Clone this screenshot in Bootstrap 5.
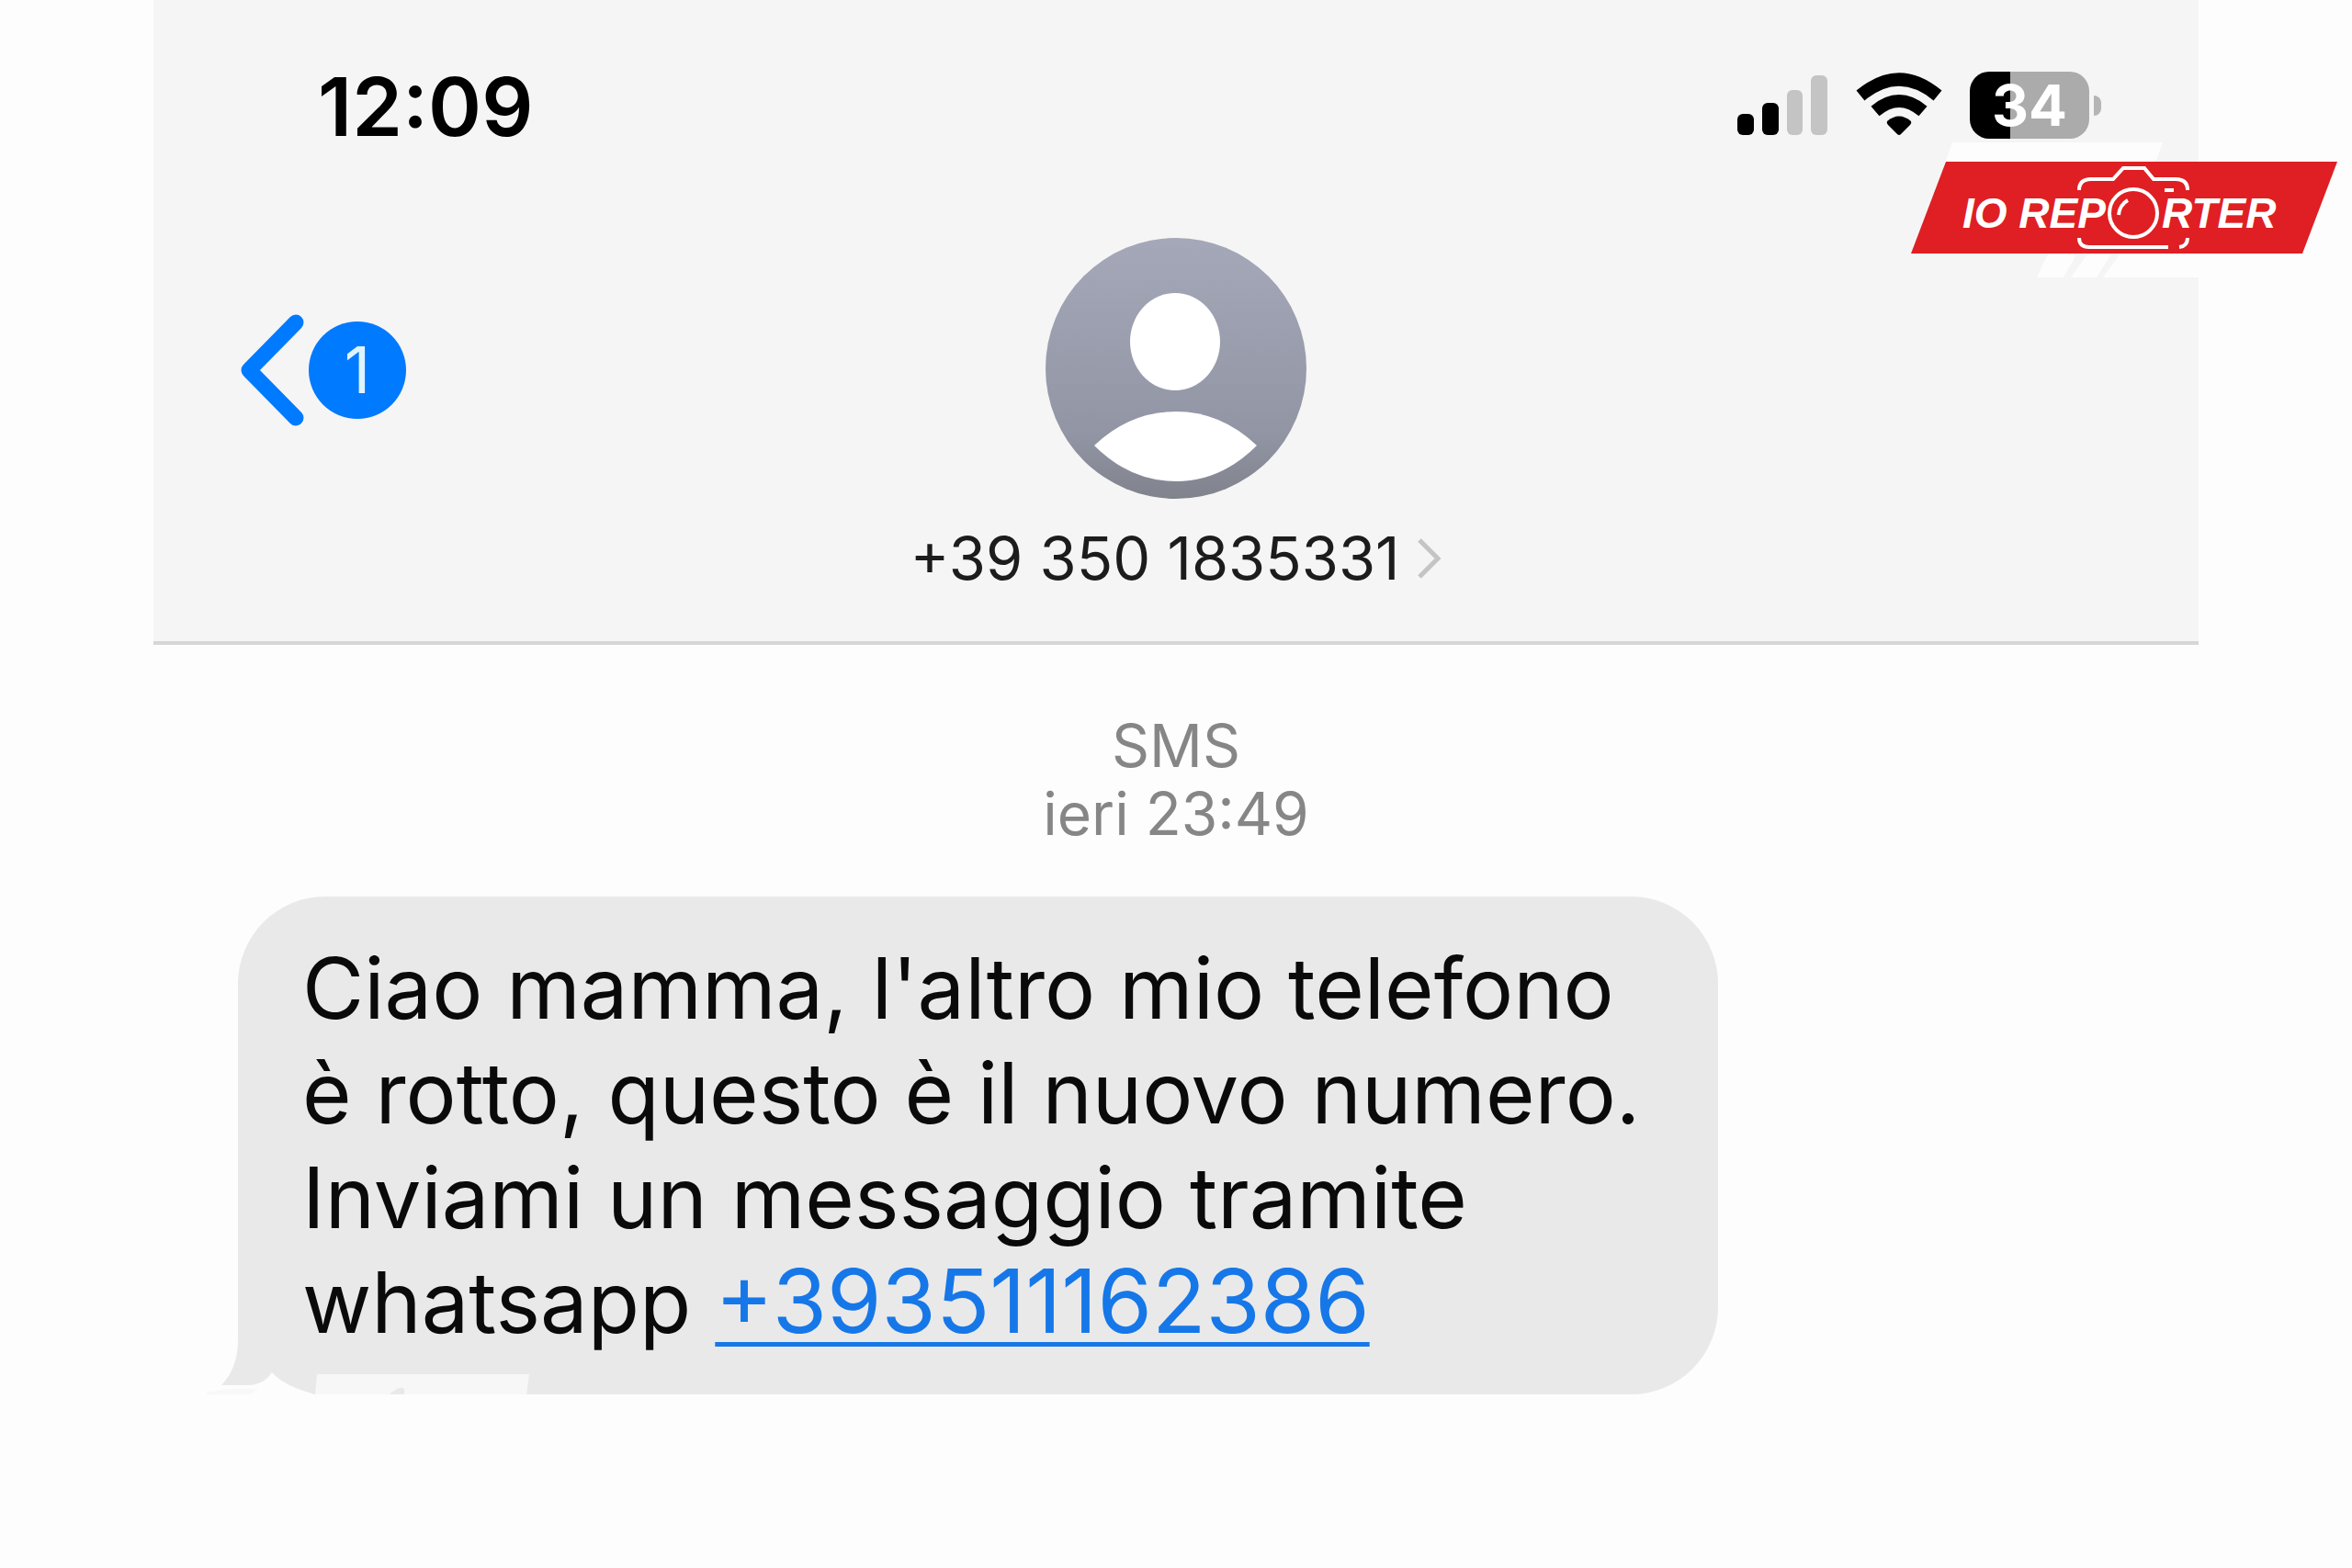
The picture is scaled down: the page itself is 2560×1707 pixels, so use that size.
<!DOCTYPE html>
<html lang="it">
<head>
<meta charset="utf-8">
<meta name="viewport" content="width=device-width, initial-scale=1">
<title>SMS +39 350 1835331</title>
<link href="https://cdn.jsdelivr.net/npm/bootstrap@5.3.0/dist/css/bootstrap.min.css" rel="stylesheet">
<style>
  body { background: #fdfdfd; color: #0a0a0a; font-family: Inter, "Liberation Sans", sans-serif; }
  .phone { max-width: 2226px; }
  .phone-header { background: #f5f5f5; border-bottom: 4px solid #d6d6d6; padding-bottom: 52px; }
  .status-bar { padding: 67px 106px 0 179px; height: 162px; }
  .clock { font-size: 88px; line-height: 98px; font-weight: 600; color: #000; }
  .status-icons { gap: 30px; padding-top: 11px; }
  .battery { width: 130px; height: 73px; border-radius: 21px; background: linear-gradient(90deg, #000 44px, #ababab 44px); color: #fff; font-size: 62px; line-height: 73px; font-weight: 700; }
  .battery-tip { width: 8px; height: 22px; border-radius: 0 8px 8px 0; background: #b5b5b5; margin-left: 5px; }
  .nav-row { padding: 96px 94px 0; }
  .back-btn { gap: 3px; margin-top: 84px; }
  .unread { width: 106px; height: 106px; background: #007aff; color: #dff3ff; font-size: 70px; line-height: 106px; }
  .contact-btn { color: #1c1c1c; font-size: 65px; line-height: 76px; }
  .contact-name { margin-top: 26px; gap: 18px; }
  .stamp { color: #868686; font-size: 64px; line-height: 74px; padding-top: 73px; }
  .bubble { background: #e9e9e9; border-radius: 95px 95px 95px 0; width: 1611px; max-width: 90%; margin: 53px 0 0 92px; padding: 43px 70px; font-size: 92px; line-height: 114px; }
  .bubble a { color: #1677e8; font-size: 96px; line-height: 1; text-decoration-thickness: 5px; text-underline-offset: 10px; }
  .tail { left: -40px; bottom: -1px; }
  .brand { top: 150px; right: 10px; }
  .brand text { font: italic 700 46px "Liberation Sans", sans-serif; fill: #fff; }
</style>
<script src="https://cdn.jsdelivr.net/npm/bootstrap@5.3.0/dist/js/bootstrap.bundle.min.js"></script>
</head>
<body>
<div class="phone mx-auto">
  <header class="phone-header">
    <div class="status-bar d-flex justify-content-between align-items-start">
      <time class="clock" datetime="12:09">12:09</time>
      <div class="status-icons d-flex align-items-start">
        <svg width="99" height="73" viewBox="0 0 99 73" aria-hidden="true">
          <rect x="0" y="46" width="18" height="23" rx="6"/>
          <rect x="27" y="34" width="18" height="35" rx="6"/>
          <rect x="54" y="20" width="17" height="49" rx="6" fill="#c4c4c4"/>
          <rect x="80" y="4" width="18" height="65" rx="6" fill="#c4c4c4"/>
        </svg>
        <svg width="94" height="73" viewBox="0 0 94 73" aria-hidden="true">
          <g fill="none" stroke="#000" stroke-width="14">
            <path d="M5 26Q47 -9 89 26"/>
            <path d="M21 43Q47 21 73 43"/>
          </g>
          <path d="M34 54Q47 43 60 54Q61 56 59 58L49 68Q47 70 45 68L35 58Q33 56 34 54Z"/>
        </svg>
        <div class="d-flex align-items-center">
          <div class="battery text-center">34</div>
          <div class="battery-tip"></div>
        </div>
      </div>
    </div>
    <div class="nav-row d-flex align-items-start">
      <div class="flex-fill w-25">
        <button type="button" class="back-btn btn border-0 p-0 d-flex align-items-center" aria-label="Indietro">
          <svg width="72" height="122" viewBox="0 0 72 122" aria-hidden="true">
            <path d="M61 9L10 61L61 113" fill="none" stroke="#007aff" stroke-width="17" stroke-linecap="round" stroke-linejoin="round"/>
          </svg>
          <span class="unread rounded-circle">1</span>
        </button>
      </div>
      <button type="button" class="contact-btn btn border-0 p-0 d-flex flex-column align-items-center">
        <svg width="286" height="286" viewBox="0 0 286 286" aria-hidden="true">
          <defs><linearGradient id="tone" x2="0" y2="1"><stop offset="0" stop-color="#a5a8b8"/><stop offset=".75" stop-color="#9295a4"/><stop offset="1" stop-color="#80838c"/></linearGradient></defs>
          <circle cx="143" cy="143" r="142" fill="url(#tone)"/>
          <ellipse cx="142" cy="114" rx="49" ry="53" fill="#fff"/>
          <path d="M54 227Q93 190 143 190Q192 190 231 227Q192 266 143 266Q93 266 54 227Z" fill="#fff"/>
        </svg>
        <span class="contact-name d-flex align-items-center">+39 350 1835331
          <svg width="28" height="46" viewBox="0 0 28 46" aria-hidden="true"><path d="M3 3L23 23L3 43" fill="none" stroke="#c4c4c4" stroke-width="5"/></svg>
        </span>
      </button>
      <div class="flex-fill w-25"></div>
    </div>
  </header>
  <main>
    <div class="stamp text-center">SMS<br>ieri 23:49</div>
    <div class="bubble position-relative">
      Ciao mamma, l'altro mio telefono<br>
      è rotto, questo è il nuovo numero.<br>
      Inviami un messaggio tramite<br>
      whatsapp <a href="tel:+393511162386">+393511162386</a>
      <svg class="tail position-absolute" width="360" height="60" viewBox="0 0 360 60" aria-hidden="true">
        <path d="M22 49H50Q68 49 77 35Q90 50 124 59V60H22Z" fill="#fdfdfd"/>
        <path d="M41 0H40Q40 30 22 49H41Z" fill="#e9e9e9"/>
        <path d="M6 57Q40 50 62 54L50 60H6Z" fill="#f8f8f8"/>
        <path d="M126 37H357L354 60H124Z" fill="#f7f7f7"/>
        <path d="M205 59Q216 49 221 53V59Z" fill="#e9e9e9"/>
      </svg>
    </div>
  </main>
</div>
<svg class="brand position-absolute" width="470" height="155" viewBox="0 0 470 155" role="img" aria-label="IO REPORTER">
  <path d="M45 5H274L265 30H36Z" fill="#fdfdfd"/>
  <path d="M152 120H184L166 152H137ZM197 120H222L202 152H174ZM232 120H426L418 152H209Z" fill="#fdfdfd"/>
  <path d="M38 26H464L426 126H0Z" fill="#df1f23"/>
  <text x="56" y="98">IO REP</text>
  <text x="273" y="98">RTER</text>
  <g fill="none" stroke="#fff" stroke-width="4">
    <circle cx="242" cy="82" r="26"/>
    <path d="M183 57Q183 45 196 45H220L231 33H254L264 45H288Q301 45 301 57"/>
    <path d="M183 109Q183 119 194 119H280M292 119Q301 118 301 109M276 57H286M226 84Q227 73 236 68"/>
  </g>
</svg>
</body>
</html>
